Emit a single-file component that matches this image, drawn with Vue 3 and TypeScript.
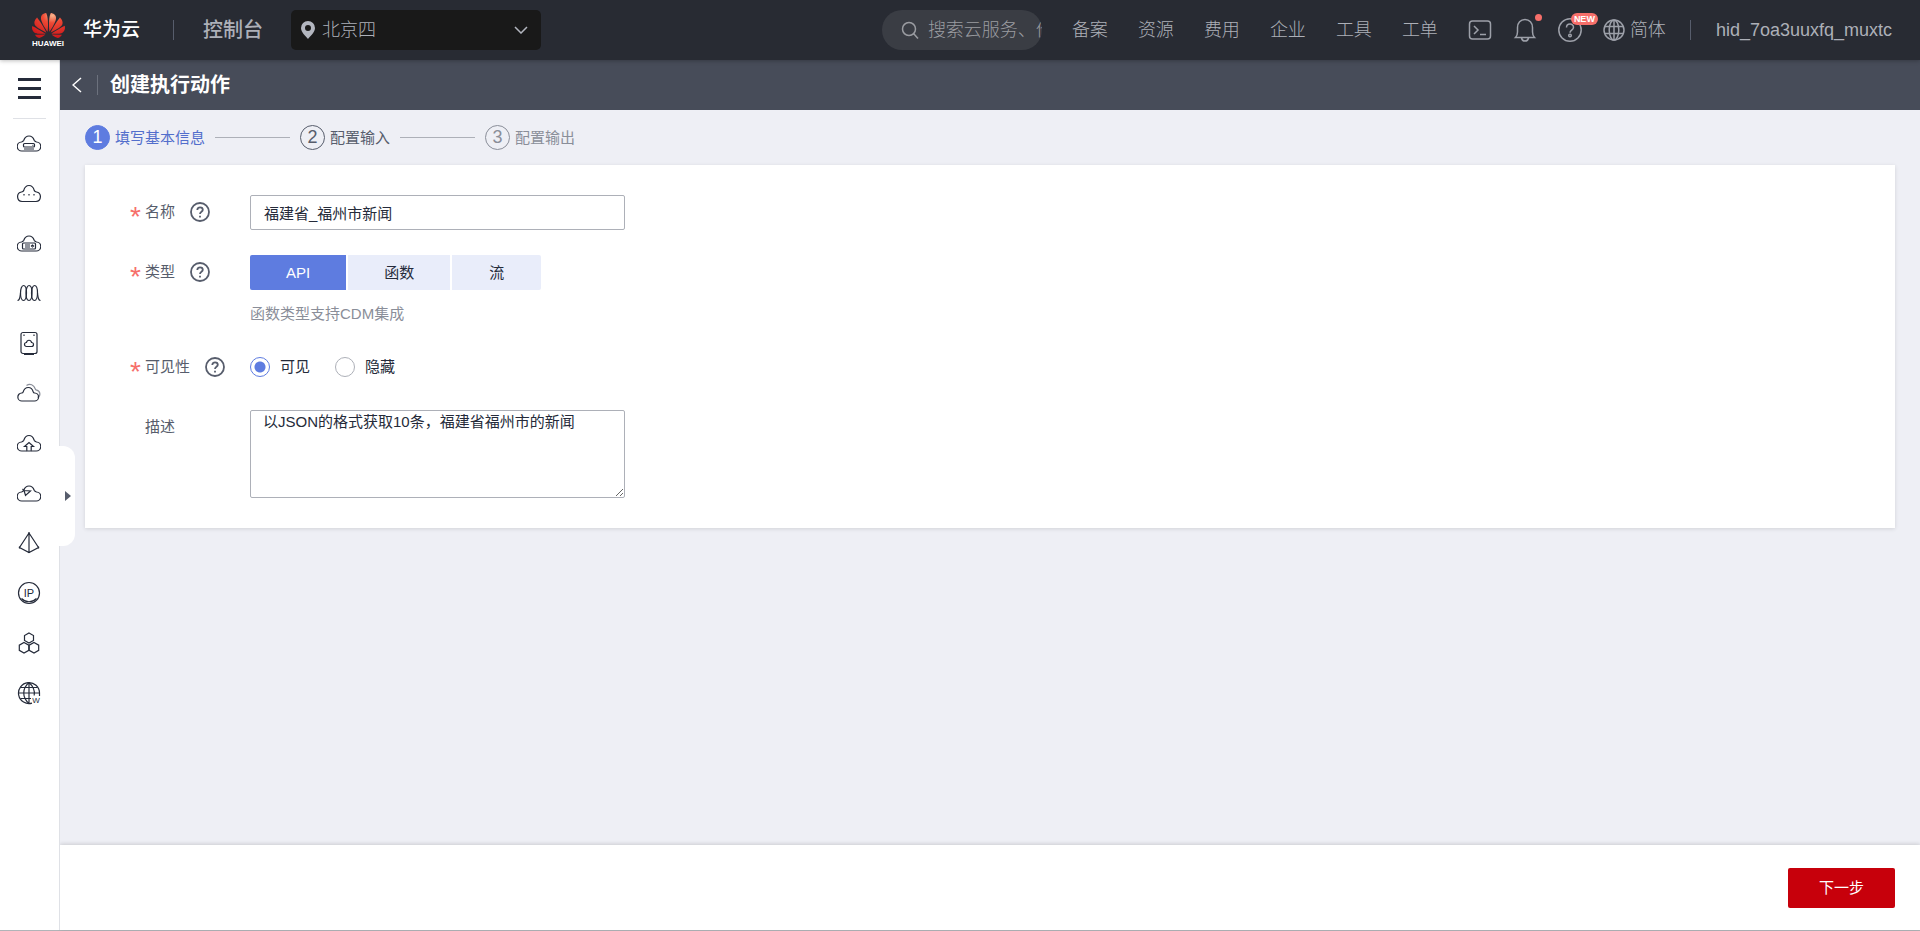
<script setup lang="ts">
import { ref } from 'vue'

interface SideIcon {
  name: string
  paths: string[]
  faded?: string
  label?: { text: string; x: number; y: number; size: number }
}

const navItems: string[] = ['备案', '资源', '费用', '企业', '工具', '工单']
const cloud = 'M5 20a4.500 4.500 0 0 1-.5-9c1-.3 1.800-.6 2.300-1.800C7.700 6.500 9.500 5 12 5s4.300 1.500 5.200 4.200c.5 1.200 1.300 1.500 2.300 1.800a4.500 4.500 0 0 1-.5 9z'

const sideIcons: SideIcon[] = [
  { name: '弹性云服务器', paths: [cloud, 'M7.500 12.500h9a1 1 0 0 1 1 1v1.500a1 1 0 0 1-1 1h-9a1 1 0 0 1-1-1v-1.500a1 1 0 0 1 1-1z', 'M7 18h10M15.500 14.300h.8'] },
  { name: '云耀云服务器', paths: ['M5 20.500a4.800 4.800 0 0 1-.5-9.500c1-.2 1.700-.5 2.200-1.400C7.500 6.500 9.500 4.500 12 4.500s4.500 2 5.300 5.100c.5.9 1.200 1.200 2.200 1.400a4.800 4.800 0 0 1-.5 9.500z', 'M7 13v1.500M12 13v1.500M17 13v1.500'] },
  { name: '裸金属服务器', paths: [cloud, 'M6.500 12h11a1 1 0 0 1 1 1v4a1 1 0 0 1-1 1h-11a1 1 0 0 1-1-1v-4a1 1 0 0 1 1-1zM8 14h5M8 16h5M14.500 15l1-1 1 1-1 1z'] },
  { name: '弹性伸缩', paths: ['M6.500 4.500c1.800 0 3 3.500 3 7.500s-1.200 7.500-3 7.500-3-3.500-3-7.500 1.200-7.500 3-7.500z', 'M12 4.500c1.800 0 3 3.500 3 7.500s-1.200 7.500-3 7.500-3-3.500-3-7.500 1.200-7.500 3-7.500z', 'M17.500 4.500c1.800 0 3 3.500 3 7.500s-1.200 7.500-3 7.500-3-3.500-3-7.500 1.200-7.500 3-7.500z', 'M.5 19.500c2.500 0 2.500-3.500 3-7.500M23.500 19.500c-2.500 0-2.500-3.500-3-7.500'] },
  { name: '云硬盘', paths: ['M6 1.500h12a2 2 0 0 1 2 2v17a2 2 0 0 1-2 2H6a2 2 0 0 1-2-2v-17a2 2 0 0 1 2-2z', 'M7 23.300h10M7 3.500v1.500M17 3.500v1.500M9.500 15.500a2 2 0 0 1 0-4c.5-3 4.500-3 5 0a2 2 0 0 1 0 4z'] },
  { name: '云备份', paths: ['M5 20a4 4 0 0 1-.3-8c.8 0 1.300-.4 1.500-1.200C7 8 9 6.500 11.300 6.500S15.500 8 16.200 10.800c.2.800.7 1.200 1.500 1.200a4 4 0 0 1-.3 8z'], faded: 'M9.500 4.500c3.500-2.500 7.500-.5 8.700 3.300.2.900.7 1.200 1.500 1.300 3.800 1 4.300 5.800.9 7.400' },
  { name: '对象存储', paths: ['M9.500 20H5a4.500 4.500 0 0 1-.5-9c1-.3 1.800-.6 2.300-1.800C7.700 6.500 9.500 4.500 12 4.500s4.300 2 5.200 4.700c.5 1.200 1.300 1.500 2.300 1.800a4.500 4.500 0 0 1-.5 9h-4.500', 'M9.800 20v-4.500H7.500L12 11.500l4.500 4H14.200V20z'] },
  { name: '函数服务', paths: [cloud, 'M7 9.500l6.500.5-5 4.500zM7 9.500L5.500 8'] },
  { name: '虚拟私有云', paths: ['M12 2L2.500 16.500 12 21.500l9.500-5zM12 2v19.500', 'M11 2h2M2.500 15.500v2M21.500 15.500v2M11 21.500h2'] },
  { name: '弹性公网IP', paths: ['M12 1.500a10.500 10.500 0 1 1 0 21 10.500 10.500 0 0 1 0-21z', 'M4.500 17.500c4 4.300 11 4.300 15 0'], label: { text: 'IP', x: 12, y: 16, size: 11 } },
  { name: '区块链', paths: ['M12 2l4.500 2.500v5L12 12 7.500 9.500v-5z', 'M7 11.500l4.800 2.600v5.200L7 22l-4.700-2.700v-5.200z', 'M17 11.500l4.700 2.600v5.200L17 22l-4.800-2.700v-5.200z'] },
  { name: '域名注册', paths: ['M15 22.100A10.500 10.500 0 1 1 22.500 12v3', 'M12 1.500c-7 6-7 15 0 21M12 1.500c4.500 4 6 8.500 5.200 13M12 1.500v21M1.500 12h21M3.500 6.500h17M3.500 17.500H14'], label: { text: 'W', x: 19, y: 22, size: 8 } },
]

const steps = [
  { title: '填写基本信息', state: 'current' },
  { title: '配置输入', state: 'next' },
  { title: '配置输出', state: 'later' },
]

const types = [
  { key: 'api', label: 'API' },
  { key: 'function', label: '函数' },
  { key: 'stream', label: '流' },
]

const region = ref('cn-north-4')
const keyword = ref('')
const actionName = ref('福建省_福州市新闻')
const actionType = ref('api')
const visibility = ref('visible')
const description = ref('以JSON的格式获取10条，福建省福州市的新闻')
</script>

<template>
  <div class="console">
    <header class="topbar">
      <a class="brand" href="#">
        <span class="logo">
          <svg class="petals" viewBox="0 2.900 24 18.200" aria-hidden="true">
            <defs>
              <radialGradient id="petal" cx="62%" cy="10%" r="85%">
                <stop offset="0" stop-color="#f9b48c" />
                <stop offset=".35" stop-color="#ee4a35" />
                <stop offset="1" stop-color="#cf1a1c" />
              </radialGradient>
            </defs>
            <path fill="url(#petal)" d="M3.67 6.14S1.82 7.91 1.72 9.78v.35c.08 1.51 1.22 2.4 1.22 2.4 1.83 1.79 6.26 4.04 7.3 4.55 0 0 .06.03.1-.01l.02-.04v-.04C7.52 10.8 3.67 6.14 3.67 6.14zM9.65 18.6c-.02-.08-.1-.08-.1-.08l-7.38.26c.8 1.43 2.15 2.53 3.56 2.2.96-.25 3.16-1.78 3.88-2.3.06-.05.04-.09.04-.09zm.08-.78C6.49 15.63.21 12.28.21 12.28c-.15.46-.2.9-.21 1.3v.07c0 1.07.4 1.82.4 1.82.8 1.69 2.34 2.2 2.34 2.2.7.3 1.4.31 1.4.31.12.02 4.4 0 5.54 0 .05 0 .08-.05.08-.05v-.06c0-.03-.03-.05-.03-.05zM9.06 3.19a3.42 3.42 0 0 0-2.57 3.15v.41c.03.6.16 1.05.16 1.05.66 2.9 3.86 7.65 4.55 8.65.05.05.1.03.1.03a.1.1 0 0 0 .06-.1c1.06-10.6-1.11-13.42-1.11-13.42-.32.02-1.19.23-1.19.23zm8.299 2.27s-.49-1.8-2.44-2.28c0 0-.57-.14-1.17-.22 0 0-2.18 2.81-1.12 13.43.01.07.06.08.06.08.07.03.1-.03.1-.03.72-1.03 3.9-5.76 4.55-8.64 0 0 .36-1.4.02-2.34zm-2.92 13.07s-.07 0-.09.05c0 0-.01.07.03.1.7.51 2.85 2 3.88 2.3 0 0 .16.05.43.06h.14c.69-.02 1.9-.37 3-2.26l-7.4-.25zm7.83-8.41c.14-2.06-1.94-3.97-1.94-3.98 0 0-3.85 4.66-6.67 10.8 0 0-.03.08.02.13l.04.01h.06c1.06-.53 5.46-2.77 7.28-4.54 0 0 1.15-.93 1.21-2.42zm1.52 2.14s-6.28 3.37-9.52 5.55c0 0-.05.04-.03.11 0 0 .03.06.07.06 1.16 0 5.56 0 5.67-.02 0 0 .57-.02 1.27-.29 0 0 1.56-.5 2.37-2.27 0 0 .73-1.45.17-3.14z" />
          </svg>
          <span class="logo-word">HUAWEI</span>
        </span>
        <span class="brand-name">华为云</span>
      </a>
      <span class="divider"></span>
      <a class="console-link" href="#">控制台</a>
      <div class="region">
        <svg class="pin" viewBox="0 0 14 18" aria-hidden="true">
          <path fill="#b3b6bf" fill-rule="evenodd" d="M7 0a7 7 0 0 1 7 7c0 4-4.500 8-7 11-2.500-3-7-7-7-11a7 7 0 0 1 7-7zm0 4a3 3 0 1 0 0 6 3 3 0 0 0 0-6z" />
        </svg>
        <select v-model="region" aria-label="区域">
          <option value="cn-north-4">北京四</option>
        </select>
        <svg class="chevron" viewBox="0 0 14 8" aria-hidden="true">
          <path d="M1 1l6 6 6-6" />
        </svg>
      </div>

      <label class="search">
        <svg viewBox="0 0 18 18" aria-hidden="true">
          <circle cx="8" cy="8" r="6.500" />
          <path d="M12.500 12.500L17 17.500" />
        </svg>
        <input v-model="keyword" type="text" placeholder="搜索云服务、价格、文档" aria-label="搜索" />
      </label>
      <nav class="links">
        <a v-for="item in navItems" :key="item" href="#">{{ item }}</a>
      </nav>
      <div class="tools">
        <button type="button" aria-label="终端">
          <svg viewBox="0 0 24 24">
            <rect x="1.500" y="3" width="21" height="18" rx="3" />
            <path d="M6 8l4 4-4 4M12 16.500h6" />
          </svg>
        </button>
        <button type="button" aria-label="消息">
          <svg viewBox="0 0 24 24">
            <path d="M2.500 19.500C4 18 4.500 16.500 4.500 14v-4.500C4.500 5 7.500 1.500 12 1.500s7.500 3.500 7.500 8V14c0 2.500.5 4 2 5.500zM8.500 20c.7 4 6.300 4 7 0" />
          </svg>
          <span class="dot"></span>
        </button>
        <button type="button" aria-label="帮助">
          <svg viewBox="0 0 24 24">
            <circle cx="12" cy="12" r="11.200" />
            <path d="M8.500 9.500C8.500 5 15.500 5 15.500 9.200c0 3-3.500 2.800-3.500 5.600" />
            <circle cx="12" cy="17.500" r="1.300" />
          </svg>
          <span class="new">NEW</span>
        </button>
      </div>
      <button class="lang" type="button">
        <svg viewBox="0 0 22 22" aria-hidden="true">
          <circle cx="11" cy="11" r="10" />
          <ellipse cx="11" cy="11" rx="4.800" ry="10" />
          <path d="M11 1v20M2 7.500h18M2 14.500h18" />
        </svg>
        <span>简体</span>
      </button>
      <span class="divider user-divider"></span>
      <a class="user" href="#">hid_7oa3uuxfq_muxtc</a>
    </header>

    <div class="body">
      <aside class="sidebar">
        <button class="menu" type="button" aria-label="菜单">
          <span></span><span></span><span></span>
        </button>
        <a v-for="icon in sideIcons" :key="icon.name" class="side-link" href="#" :aria-label="icon.name">
          <svg viewBox="0 0 24 24">
            <path v-if="icon.faded" class="faded" :d="icon.faded" />
            <path v-for="d in icon.paths" :key="d" :d="d" />
            <text v-if="icon.label" :x="icon.label.x" :y="icon.label.y" :font-size="icon.label.size">{{ icon.label.text }}</text>
          </svg>
        </a>
        <button class="handle" type="button" aria-label="展开">
          <svg viewBox="0 0 6 10"><path d="M0 0l6 5-6 5z" /></svg>
        </button>
      </aside>

      <main class="main">
        <div class="titlebar">
          <a class="back" href="#" aria-label="返回">
            <svg viewBox="0 0 10 16"><path d="M9 1L1 8l8 7" /></svg>
          </a>
          <h1>创建执行动作</h1>
        </div>

        <div class="content">
          <ol class="steps">
            <li v-for="(step, i) in steps" :key="step.title" :class="step.state">
              <span class="num">{{ i + 1 }}</span>
              <span>{{ step.title }}</span>
            </li>
          </ol>

          <form id="action-form" class="card" @submit.prevent>
            <div class="row">
              <div class="label">
                <span class="star">*</span>
                <label for="name">名称</label>
                <svg class="help" viewBox="0 0 20 20"><circle cx="10" cy="10" r="9" /><path d="M7.300 8c0-3.600 5.500-3.400 5.500-.2 0 2-2.800 2-2.800 4.200M10 13.700v1.800" /></svg>
              </div>
              <input id="name" v-model="actionName" class="text" type="text" />
            </div>

            <div class="row">
              <div class="label">
                <span class="star">*</span>
                <span id="type-label">类型</span>
                <svg class="help" viewBox="0 0 20 20"><circle cx="10" cy="10" r="9" /><path d="M7.300 8c0-3.600 5.500-3.400 5.500-.2 0 2-2.800 2-2.800 4.200M10 13.700v1.800" /></svg>
              </div>
              <div>
                <div class="segments" role="group" aria-labelledby="type-label">
                  <button
                    v-for="t in types"
                    :key="t.key"
                    type="button"
                    :class="{ on: actionType === t.key }"
                    :aria-pressed="actionType === t.key"
                    @click="actionType = t.key"
                  >{{ t.label }}</button>
                </div>
                <p class="hint">函数类型支持CDM集成</p>
              </div>
            </div>

            <div class="row">
              <div class="label">
                <span class="star">*</span>
                <span id="visibility-label">可见性</span>
                <svg class="help" viewBox="0 0 20 20"><circle cx="10" cy="10" r="9" /><path d="M7.300 8c0-3.600 5.500-3.400 5.500-.2 0 2-2.800 2-2.800 4.200M10 13.700v1.800" /></svg>
              </div>
              <div class="radios" role="radiogroup" aria-labelledby="visibility-label">
                <label><input v-model="visibility" type="radio" name="visibility" value="visible" />可见</label>
                <label><input v-model="visibility" type="radio" name="visibility" value="hidden" />隐藏</label>
              </div>
            </div>

            <div class="row">
              <div class="label">
                <span class="star"></span>
                <label for="description">描述</label>
              </div>
              <textarea id="description" v-model="description"></textarea>
            </div>
          </form>
        </div>

        <footer class="footer">
          <button type="submit" form="action-form">下一步</button>
        </footer>
      </main>
    </div>
  </div>
</template>

<style>
body {
  background: #eeeff5;
}
</style>

<style scoped>
.console {
  display: flex;
  flex-direction: column;
  min-height: 100vh;
  box-sizing: border-box;
  border-bottom: 1px solid #b0b4b8;
  font: 15px/20px "Liberation Sans", "Noto Sans CJK SC", sans-serif;
  color: #252b3a;
}
.console *,
.console *::before {
  box-sizing: border-box;
}
button,
input,
select,
textarea {
  font: inherit;
  color: inherit;
}
button {
  padding: 0;
  border: 0;
  background: none;
}
a {
  color: inherit;
  text-decoration: none;
}
svg {
  display: block;
  flex: none;
}

.topbar {
  position: relative;
  z-index: 1;
  display: flex;
  align-items: center;
  height: 60px;
  padding: 0 28px 0 32px;
  background: #282b33;
  box-shadow: 0 1px 4px rgba(0, 0, 0, 0.25);
  color: #adb0b8;
  font-size: 18px;
  font-weight: 300;
  line-height: 24px;
  white-space: nowrap;
}
.brand {
  display: flex;
  align-items: center;
  gap: 18px;
}
.logo {
  display: grid;
  gap: 2px;
  width: 33px;
}
.petals {
  width: 33px;
  height: 25px;
}
.logo-word {
  font-size: 8px;
  font-weight: bold;
  line-height: 8px;
  color: #fff;
}
.brand-name {
  font-size: 19px;
  font-weight: 500;
  color: #fff;
}
.divider {
  width: 1px;
  height: 20px;
  margin: 0 29px 0 33px;
  background: #575d6c;
}
.user-divider {
  margin: 0 25px 0 24px;
}
.console-link {
  font-size: 20px;
  font-weight: 500;
}
.region {
  display: flex;
  align-items: center;
  width: 250px;
  height: 40px;
  margin-left: 28px;
  padding: 0 13px 0 10px;
  border-radius: 5px;
  background: #191919;
}
.pin {
  width: 14px;
  height: 18px;
}
.region select {
  flex: 1;
  height: 40px;
  margin-right: -14px;
  padding: 0 14px 0 7px;
  border: 0;
  background: none;
  appearance: none;
}
.chevron {
  width: 14px;
  height: 8px;
  pointer-events: none;
}
.chevron path {
  fill: none;
  stroke: #b3b6bf;
  stroke-width: 1.5;
}
.search {
  display: flex;
  align-items: center;
  gap: 9px;
  width: 160px;
  height: 40px;
  margin-left: auto;
  padding-left: 19px;
  border-radius: 20px;
  background: #3a3d44;
  overflow: hidden;
}
.search svg {
  width: 18px;
  height: 18px;
  fill: none;
  stroke: #9a9ca1;
  stroke-width: 1.5;
}
.search input {
  flex: 1;
  min-width: 0;
  padding: 0;
  border: 0;
  background: none;
  outline: none;
}
.search input::placeholder {
  color: #9a9ca1;
  opacity: 1;
}
.links {
  display: flex;
  gap: 30px;
  margin: 0 30px;
}
.tools {
  display: flex;
  gap: 21px;
  margin-right: 21px;
}
.tools button {
  position: relative;
}
.tools svg,
.lang svg {
  fill: none;
  stroke: #9da0a9;
  stroke-width: 1.5;
}
.tools svg {
  width: 24px;
  height: 24px;
}
.dot {
  position: absolute;
  top: -4px;
  right: -5px;
  width: 7px;
  height: 7px;
  border-radius: 50%;
  background: #f66f6a;
}
.new {
  position: absolute;
  top: -5px;
  left: 13px;
  width: 27px;
  border-radius: 6px;
  background: #f66f6a;
  color: #fff;
  font-size: 9px;
  font-weight: bold;
  line-height: 12px;
  text-align: center;
}
.lang {
  display: flex;
  align-items: center;
  gap: 5px;
}
.lang svg {
  width: 22px;
  height: 22px;
}

.body {
  display: flex;
  flex: 1;
}
.sidebar {
  position: relative;
  flex: none;
  width: 60px;
  border-right: 1px solid #dfe1e6;
  background: #fff;
}
.menu {
  display: grid;
  align-content: center;
  justify-content: center;
  gap: 6px;
  width: 33px;
  height: 59px;
  margin: 0 auto;
  padding-bottom: 2px;
  border-bottom: 1px solid #dfe1e6;
}
.menu span {
  width: 23px;
  height: 3px;
  background: #252b3a;
}
.side-link {
  display: flex;
  align-items: center;
  justify-content: center;
  height: 50px;
  padding: 0 2px 3px 0;
}
.side-link svg {
  width: 24px;
  height: 24px;
}
.side-link path {
  fill: none;
  stroke: #252b3a;
  stroke-width: 1.2;
}
.side-link .faded {
  stroke: #8a8e99;
}
.side-link text {
  fill: #252b3a;
  text-anchor: middle;
}
.handle {
  position: absolute;
  top: 386px;
  left: 59px;
  display: flex;
  align-items: center;
  width: 16px;
  height: 100px;
  padding-left: 6px;
  border-radius: 0 12px 12px 0;
  background: #fff;
}
.handle svg {
  width: 6px;
  height: 10px;
  fill: #575d6c;
}

.main {
  display: flex;
  flex: 1;
  flex-direction: column;
  min-width: 0;
  background: #eeeff5;
}
.titlebar {
  display: flex;
  align-items: center;
  height: 50px;
  padding-left: 12px;
  background: #474c59;
  color: #fff;
}
.back {
  padding: 2px 15px 2px 0;
  border-right: 1px solid #6c717d;
}
.back svg {
  width: 10px;
  height: 16px;
  fill: none;
  stroke: #fff;
  stroke-width: 1.5;
}
h1 {
  margin: 0 0 0 12px;
  font-size: 20px;
  font-weight: bold;
  line-height: 24px;
}
.content {
  flex: 1;
  padding: 15px 25px 25px;
}
.steps {
  display: flex;
  margin: 0 0 15px;
  padding: 0;
  list-style: none;
}
.steps li {
  display: flex;
  align-items: center;
  gap: 5px;
}
.steps li + li::before {
  content: '';
  width: 75px;
  height: 1px;
  margin: 0 5px 0 10px;
  background: #adb0b8;
}
.num {
  width: 25px;
  height: 25px;
  border: 1px solid currentColor;
  border-radius: 50%;
  font-size: 18px;
  line-height: 23px;
  text-align: center;
}
.current {
  color: #526ecc;
}
.current .num {
  border-color: #5e7ce0;
  background: #5e7ce0;
  color: #fff;
}
.next {
  color: #575d6c;
}
.later {
  color: #8a8e99;
}
.card {
  display: grid;
  gap: 25px;
  padding: 30px 45px;
  background: #fff;
  box-shadow: 0 1px 4px rgba(0, 0, 0, 0.12);
}
.row {
  display: grid;
  grid-template-columns: 120px 1fr;
  align-items: start;
}
.label {
  display: flex;
  align-items: center;
  height: 34px;
  color: #575d6c;
}
.star {
  width: 15px;
  padding-top: 9px;
  color: #f66f6a;
  font-size: 28px;
}
.help {
  width: 20px;
  height: 20px;
  margin-left: 15px;
  fill: none;
  stroke: #575d6c;
  stroke-width: 1.8;
}
.text,
textarea {
  width: 375px;
  border: 1px solid #adb0b8;
  border-radius: 2px;
  background: #fff;
  outline: none;
}
.text {
  height: 35px;
  padding: 0 13px;
}
textarea {
  display: block;
  height: 88px;
  padding: 1px 12px;
  resize: both;
}
.segments {
  display: flex;
  gap: 2px;
}
.segments button {
  min-width: 89px;
  height: 35px;
  padding: 0 36px;
  background: #e9edfa;
}
.segments button:first-child {
  border-radius: 2px 0 0 2px;
}
.segments button:last-child {
  border-radius: 0 2px 2px 0;
}
.segments .on {
  background: #5e7ce0;
  color: #fff;
}
.hint {
  margin: 13px 0 0;
  line-height: 22px;
  color: #8a8e99;
}
.radios {
  display: flex;
  align-items: center;
  gap: 25px;
  height: 34px;
  margin-bottom: 1px;
}
.radios label {
  display: flex;
  align-items: center;
  gap: 10px;
}
.radios input {
  width: 20px;
  height: 20px;
  margin: 0;
  border: 1px solid #adb0b8;
  border-radius: 50%;
  appearance: none;
}
.radios input:checked {
  border-color: #5e7ce0;
  background: radial-gradient(circle, #5e7ce0 5px, #fff 6px);
}
.footer {
  display: flex;
  align-items: center;
  justify-content: flex-end;
  height: 85px;
  padding-right: 25px;
  background: #fff;
  box-shadow: 0 -1px 4px rgba(0, 0, 0, 0.15);
}
.footer button {
  width: 107px;
  height: 40px;
  border-radius: 2px;
  background: #c7000b;
  color: #fff;
}
</style>
